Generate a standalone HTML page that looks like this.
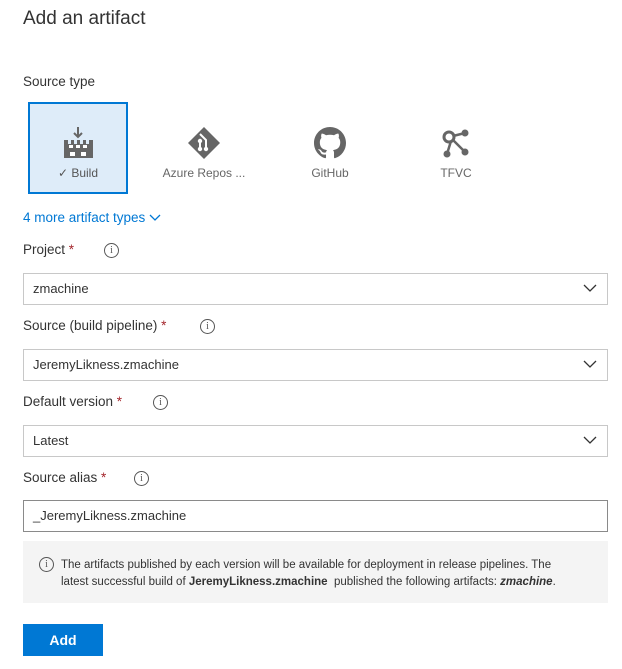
<!DOCTYPE html>
<html><head><style>
body{margin:0;background:#fff;font-family:"Liberation Sans",sans-serif;color:#333;width:622px;height:669px;position:relative;overflow:hidden}
.a{position:absolute}
.lbl{font-size:13.5px;color:#333}
.req{color:#a4262c}
.info{display:inline-block;width:13px;height:13px;border:1px solid #555;border-radius:50%;font-size:10px;line-height:13px;text-align:center;color:#555;font-family:"Liberation Serif",serif}
.dd{position:absolute;left:23px;width:583px;height:30px;border:1px solid #c8c8c8;font-size:13px;line-height:30px;box-sizing:content-box}
.dd span{padding-left:9px}
.dd svg{position:absolute;right:10px;top:10px}
.tl{position:absolute;top:166px;font-size:12px;color:#666;text-align:center;width:120px}
</style></head><body>
<div class="a" style="left:23px;top:8px;font-size:19px;color:#333">Add an artifact</div>
<div class="a lbl" style="left:23px;top:74px">Source type</div>
<div class="a" style="left:28px;top:102px;width:96px;height:88px;background:#deecf9;border:2px solid #0078d4"></div>
<svg class="a" style="left:63px;top:126px" width="30" height="34" viewBox="0 0 30 34"><path d="M15 1v10M11 7l4 4 4-4" stroke="#666" stroke-width="2" fill="none"/><path d="M1 14h4v4h3v-4h3v4h3v-4h3v4h3v-4h3v4h3v-4h4v18H1z" fill="#666"/><rect x="6" y="19" width="4" height="3" fill="#fff"/><rect x="13" y="19" width="4" height="3" fill="#fff"/><rect x="20" y="19" width="4" height="3" fill="#fff"/><rect x="7" y="26" width="5" height="4" fill="#fff"/><rect x="18" y="26" width="5" height="4" fill="#fff"/></svg>
<div class="tl" style="left:18px;color:#555">✓ Build</div>
<svg class="a" style="left:188px;top:127px" width="32" height="32" viewBox="0 0 32 32"><path d="M16 0L32 16 16 32 0 16z" fill="#666"/><path d="M12 7l6 6v10M18 13v0" stroke="#fff" stroke-width="2" fill="none"/><circle cx="12" cy="14" r="2.2" fill="#fff"/><circle cx="18" cy="22" r="2.2" fill="#fff"/><circle cx="12" cy="22" r="2.2" fill="#fff"/><path d="M12 14v8" stroke="#fff" stroke-width="2"/></svg>
<div class="tl" style="left:144px">Azure Repos ...</div>
<svg class="a" style="left:314px;top:127px" width="32" height="32" viewBox="0 0 16 16"><path fill="#666" d="M8 0C3.58 0 0 3.580 0 8c0 3.54 2.29 6.53 5.47 7.59.4.07.55-.17.55-.38 0-.19-.01-.82-.01-1.490-2.01.37-2.53-.49-2.690-.94-.09-.23-.48-.94-.82-1.13-.28-.15-.68-.52-.01-.53.63-.01 1.080.58 1.230.82.72 1.21 1.870.87 2.330.66.07-.52.28-.87.51-1.07-1.78-.2-3.64-.89-3.64-3.95 0-.87.31-1.59.82-2.15-.08-.2-.36-1.02.08-2.12 0 0 .67-.21 2.2.82.64-.18 1.32-.27 2-.27.68 0 1.36.09 2 .27 1.53-1.04 2.2-.82 2.2-.82.44 1.1.16 1.92.08 2.12.51.56.82 1.27.82 2.15 0 3.07-1.87 3.75-3.65 3.95.29.25.54.73.54 1.48 0 1.07-.01 1.93-.01 2.2 0 .21.15.46.55.38A8.013 8.013 0 0016 8c0-4.42-3.58-8-8-8z"/></svg>
<div class="tl" style="left:270px">GitHub</div>
<svg class="a" style="left:442px;top:128px" width="28" height="30" viewBox="0 0 28 30"><circle cx="7" cy="9" r="5" stroke="#666" stroke-width="3" fill="none"/><circle cx="23" cy="5" r="3.5" fill="#666"/><circle cx="23" cy="24" r="3.5" fill="#666"/><circle cx="5" cy="26" r="3.5" fill="#666"/><path d="M11 8l12-3M11 12l12 12M9 13l-4 13" stroke="#666" stroke-width="2.5"/></svg>
<div class="tl" style="left:396px">TFVC</div>
<div class="a" style="left:23px;top:210px;font-size:13.5px;color:#0078d4">4 more artifact types <svg width="12" height="8" viewBox="0 0 12 8"><path d="M1 1l5 5 5-5" stroke="#0078d4" stroke-width="1.3" fill="none"/></svg></div>

<div class="a lbl" style="left:23px;top:242px">Project <span class="req">*</span></div><span class="a info" style="left:104px;top:243px">i</span>
<div class="dd" style="top:273px"><span>zmachine</span><svg width="14" height="9" viewBox="0 0 14 9"><path d="M1 1l6 6 6-6" stroke="#333" stroke-width="1.3" fill="none"/></svg></div>
<div class="a lbl" style="left:23px;top:318px">Source (build pipeline) <span class="req">*</span></div><span class="a info" style="left:200px;top:319px">i</span>
<div class="dd" style="top:349px"><span>JeremyLikness.zmachine</span><svg width="14" height="9" viewBox="0 0 14 9"><path d="M1 1l6 6 6-6" stroke="#333" stroke-width="1.3" fill="none"/></svg></div>
<div class="a lbl" style="left:23px;top:394px">Default version <span class="req">*</span></div><span class="a info" style="left:153px;top:395px">i</span>
<div class="dd" style="top:425px"><span>Latest</span><svg width="14" height="9" viewBox="0 0 14 9"><path d="M1 1l6 6 6-6" stroke="#333" stroke-width="1.3" fill="none"/></svg></div>
<div class="a lbl" style="left:23px;top:470px">Source alias <span class="req">*</span></div><span class="a info" style="left:134px;top:471px">i</span>
<div class="dd" style="top:500px;border-color:#8a8a8a"><span>_JeremyLikness.zmachine</span></div>

<div class="a" style="left:23px;top:541px;width:585px;height:62px;background:#f4f4f4"></div>
<span class="a info" style="left:39px;top:557px">i</span>
<div class="a" style="left:61px;top:557px;font-size:11.5px;line-height:17px;color:#333">The artifacts published by each version will be available for deployment in release pipelines. The<br>latest successful build of <b>JeremyLikness.zmachine</b>&nbsp; published the following artifacts: <b><i>zmachine</i></b>.</div>
<div class="a" style="left:23px;top:624px;width:80px;height:32px;background:#0078d4;color:#fff;font-size:14px;font-weight:bold;text-align:center;line-height:32px">Add</div>
</body></html>
